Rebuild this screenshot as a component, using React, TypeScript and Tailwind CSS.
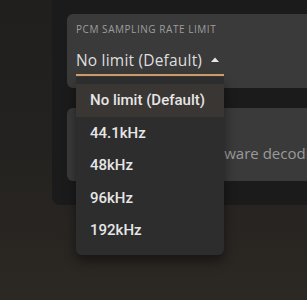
const options = ["No limit (Default)", "44.1kHz", "48kHz", "96kHz", "192kHz"];

export default function App() {
  return (
    <div className="relative w-[307px] h-[300px] overflow-hidden bg-gradient-to-b from-[#201f1e] via-[#242220] to-[#2c2823] font-['Open_Sans',sans-serif]">
      {/* main panel */}
      <div className="ml-[52px] h-[205px] bg-[#1b1b1b] rounded-bl-lg pl-[15px] pt-[14px] flex flex-col gap-[20px]">
        <div className="h-[74px] bg-[#3a3a3a] rounded-l-md pl-[9px] pt-[10px]">
          <div className="text-[10px] tracking-[0.55px] text-[#9d9d9d] uppercase leading-none whitespace-nowrap">
            PCM sampling rate limit
          </div>
          <div className="mt-[13px] w-[148px] h-[29px] border-b-2 border-[#d2a06c] flex items-center gap-[9px]">
            <span className="text-[15.5px] tracking-[0.2px] text-[#dedede] leading-none whitespace-nowrap">No limit (Default)</span>
            <svg width="8" height="5" viewBox="0 0 8 5" className="mt-[-2px]">
              <path d="M0 5 L4 0.5 L8 5 Z" fill="#e6e6e6" />
            </svg>
          </div>
        </div>
        <div className="h-[73px] bg-[#3a3a3a] rounded-l-md flex items-center pt-[18px] overflow-hidden">
          <span className="text-[15px] text-[#9a9a9a] whitespace-nowrap pl-[94px]">Use hardware decoding</span>
        </div>
      </div>

      {/* dropdown menu */}
      <div className="absolute left-[76px] top-[77px] w-[148px] bg-[#2d2d2d] rounded-b-md shadow-[0_6px_12px_rgba(0,0,0,0.45)] pt-[7px] pb-[8px] font-['Roboto',sans-serif]">
        {options.map((o, i) => (
          <div
            key={o}
            className={`h-[32.5px] flex items-center pl-[14px] text-[15px] font-medium text-[#e6e6e6] ${i === 0 ? "bg-[#3a3633]" : ""}`}
          >
            {o}
          </div>
        ))}
      </div>
    </div>
  );
}
